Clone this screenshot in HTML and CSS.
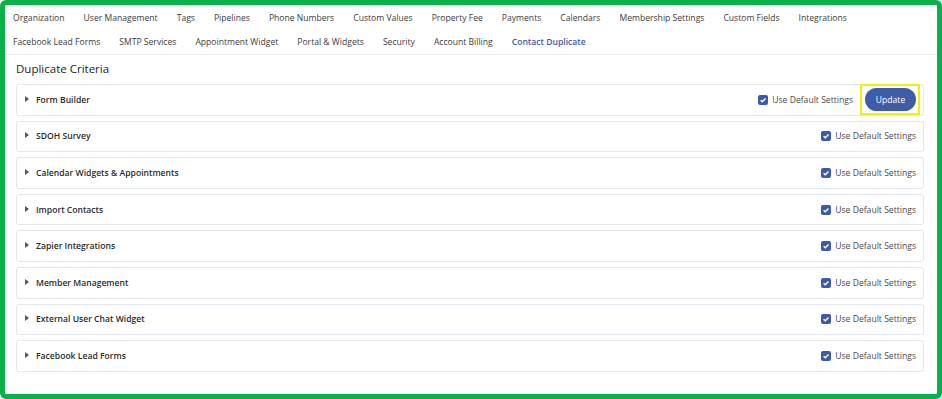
FILE: index.html
```html
<!DOCTYPE html>
<html lang="en">
<head>
  <meta charset="UTF-8" />
  <meta name="viewport" content="width=device-width, initial-scale=1.0" />
  <title>Contact Duplicate</title>
  <link rel="stylesheet" href="styles.css">
</head>
<body>
  <div class="frame">
    <nav class="tabs">
      <a>Organization</a>
      <a>User Management</a>
      <a>Tags</a>
      <a>Pipelines</a>
      <a>Phone Numbers</a>
      <a>Custom Values</a>
      <a>Property Fee</a>
      <a>Payments</a>
      <a>Calendars</a>
      <a>Membership Settings</a>
      <a>Custom Fields</a>
      <a>Integrations</a>
      <a>Facebook Lead Forms</a>
      <a>SMTP Services</a>
      <a>Appointment Widget</a>
      <a>Portal &amp; Widgets</a>
      <a>Security</a>
      <a>Account Billing</a>
      <a class="active">Contact Duplicate</a>
    </nav>

    <div class="content">
      <h3 class="page-title">Duplicate Criteria</h3>

      <div class="criteria-list">
        <div class="criteria-row">
          <span class="caret"></span>
          <span class="row-title">Form Builder</span>
          <label class="default-check"><span class="box"><svg viewBox="0 0 10 10"><path d="M2.6 5.2 L4.3 6.8 L7.5 3.4" /></svg></span>Use Default Settings</label>
          <span class="highlight"><button class="update-btn">Update</button></span>
        </div>
        <div class="criteria-row">
          <span class="caret"></span>
          <span class="row-title">SDOH Survey</span>
          <label class="default-check"><span class="box"><svg viewBox="0 0 10 10"><path d="M2.6 5.2 L4.3 6.8 L7.5 3.4" /></svg></span>Use Default Settings</label>
        </div>
        <div class="criteria-row">
          <span class="caret"></span>
          <span class="row-title">Calendar Widgets &amp; Appointments</span>
          <label class="default-check"><span class="box"><svg viewBox="0 0 10 10"><path d="M2.6 5.2 L4.3 6.8 L7.5 3.4" /></svg></span>Use Default Settings</label>
        </div>
        <div class="criteria-row">
          <span class="caret"></span>
          <span class="row-title">Import Contacts</span>
          <label class="default-check"><span class="box"><svg viewBox="0 0 10 10"><path d="M2.6 5.2 L4.3 6.8 L7.5 3.4" /></svg></span>Use Default Settings</label>
        </div>
        <div class="criteria-row">
          <span class="caret"></span>
          <span class="row-title">Zapier Integrations</span>
          <label class="default-check"><span class="box"><svg viewBox="0 0 10 10"><path d="M2.6 5.2 L4.3 6.8 L7.5 3.4" /></svg></span>Use Default Settings</label>
        </div>
        <div class="criteria-row">
          <span class="caret"></span>
          <span class="row-title">Member Management</span>
          <label class="default-check"><span class="box"><svg viewBox="0 0 10 10"><path d="M2.6 5.2 L4.3 6.8 L7.5 3.4" /></svg></span>Use Default Settings</label>
        </div>
        <div class="criteria-row">
          <span class="caret"></span>
          <span class="row-title">External User Chat Widget</span>
          <label class="default-check"><span class="box"><svg viewBox="0 0 10 10"><path d="M2.6 5.2 L4.3 6.8 L7.5 3.4" /></svg></span>Use Default Settings</label>
        </div>
        <div class="criteria-row">
          <span class="caret"></span>
          <span class="row-title">Facebook Lead Forms</span>
          <label class="default-check"><span class="box"><svg viewBox="0 0 10 10"><path d="M2.6 5.2 L4.3 6.8 L7.5 3.4" /></svg></span>Use Default Settings</label>
        </div>
      </div>
    </div>
  </div>
</body>
</html>
```

FILE: styles.css
```css
body {
  font-family: "Open Sans", "Noto Sans", sans-serif;
  background: #ffffff;
  margin: 0;
  padding: 0;
}

.frame {
  height: 399px;
  box-sizing: border-box;
  border: 5px solid #0bb04b;
  border-radius: 6px;
  background: #fff;
}

.tabs {
  display: flex;
  flex-wrap: wrap;
  column-gap: 19px;
  padding: 1px 20px 0 8px;
  border-bottom: 1px solid #eceef2;
}

.tabs a {
  font-size: 8.6px;
  font-weight: 500;
  line-height: 24px;
  color: #3c3c3c;
  cursor: pointer;
}

.tabs a.active {
  color: #3d5aa8;
  font-weight: 600;
}

.content {
  padding: 0 13px 0 11px;
}

.page-title {
  margin: 0;
  padding: 6px 0 8px;
  font-size: 11.5px;
  line-height: 15px;
  font-weight: 500;
  color: #222;
}

.criteria-list {
  display: flex;
  flex-direction: column;
  gap: 5px;
}

.criteria-row {
  display: flex;
  align-items: center;
  height: 31.6px;
  box-sizing: border-box;
  padding: 0 7px 0 8px;
  border: 1px solid #e3e6ec;
  border-radius: 3px;
}

.caret {
  width: 0;
  height: 0;
  border-top: 3.5px solid transparent;
  border-bottom: 3.5px solid transparent;
  border-left: 4px solid #555;
  margin-right: 7px;
  margin-top: -2px;
}

.row-title {
  font-size: 8.6px;
  font-weight: 600;
  color: #2b2b2b;
}

.default-check {
  display: flex;
  align-items: center;
  gap: 4px;
  margin-left: auto;
  font-size: 8.6px;
  font-weight: 500;
  color: #4a4a4a;
}

.default-check .box {
  width: 10px;
  height: 10px;
  border-radius: 2px;
  background: #3d5aa8;
  display: flex;
}

.default-check svg {
  width: 10px;
  height: 10px;
  fill: none;
  stroke: #fff;
  stroke-width: 1.4;
}

.highlight {
  display: flex;
  margin: 0 -4px 0 7px;
  padding: 2px 2px 2px 3px;
  border: 2px solid #f2ef0e;
}

.update-btn {
  width: 51px;
  height: 23px;
  border: none;
  border-radius: 12px;
  background: #3f5ca8;
  color: #fff;
  font-family: inherit;
  font-size: 8.6px;
  font-weight: 500;
  cursor: pointer;
}
```
